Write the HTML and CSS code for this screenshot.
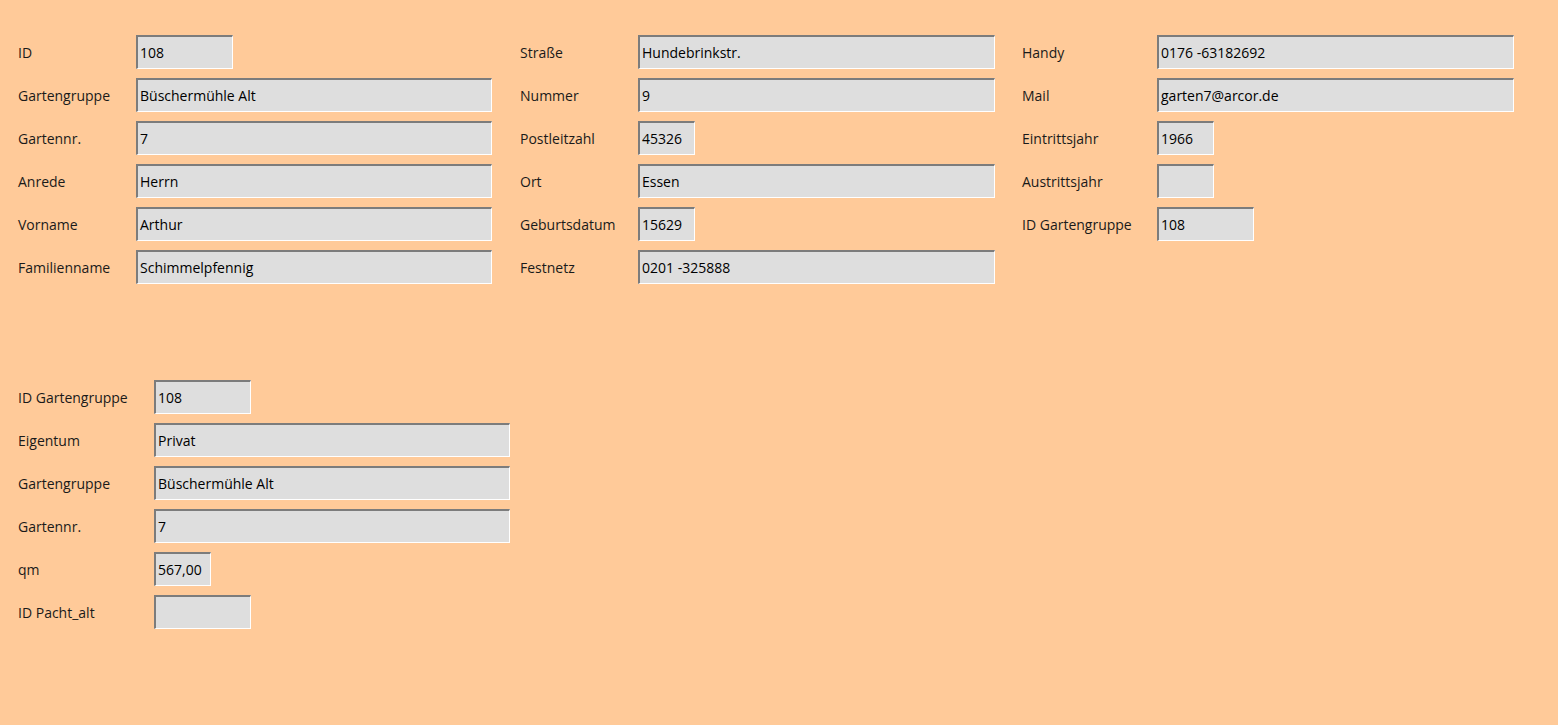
FILE: index.html
```html
<!DOCTYPE html>
<html lang="de">
<head>
<meta charset="utf-8">
<title>Mitglieder</title>
<link rel="stylesheet" href="styles.css">
</head>
<body>
<main class="page">
  <section class="top">
    <div class="col col1">
      <div class="row"><span class="lbl">ID</span><span class="fld w96">108</span></div>
      <div class="row"><span class="lbl">Gartengruppe</span><span class="fld w356">Büschermühle Alt</span></div>
      <div class="row"><span class="lbl">Gartennr.</span><span class="fld w356">7</span></div>
      <div class="row"><span class="lbl">Anrede</span><span class="fld w356">Herrn</span></div>
      <div class="row"><span class="lbl">Vorname</span><span class="fld w356">Arthur</span></div>
      <div class="row"><span class="lbl">Familienname</span><span class="fld w356">Schimmelpfennig</span></div>
    </div>
    <div class="col col2">
      <div class="row"><span class="lbl">Straße</span><span class="fld w357">Hundebrinkstr.</span></div>
      <div class="row"><span class="lbl">Nummer</span><span class="fld w357">9</span></div>
      <div class="row"><span class="lbl">Postleitzahl</span><span class="fld w57">45326</span></div>
      <div class="row"><span class="lbl">Ort</span><span class="fld w357">Essen</span></div>
      <div class="row"><span class="lbl">Geburtsdatum</span><span class="fld w57">15629</span></div>
      <div class="row"><span class="lbl">Festnetz</span><span class="fld w357">0201 -325888</span></div>
    </div>
    <div class="col col3">
      <div class="row"><span class="lbl">Handy</span><span class="fld w357">0176 -63182692</span></div>
      <div class="row"><span class="lbl">Mail</span><span class="fld w357">garten7@arcor.de</span></div>
      <div class="row"><span class="lbl">Eintrittsjahr</span><span class="fld w57">1966</span></div>
      <div class="row"><span class="lbl">Austrittsjahr</span><span class="fld w57"></span></div>
      <div class="row"><span class="lbl">ID Gartengruppe</span><span class="fld w97">108</span></div>
    </div>
  </section>
  <section class="bottom">
    <div class="col col4">
      <div class="row"><span class="lbl">ID Gartengruppe</span><span class="fld w96">108</span></div>
      <div class="row"><span class="lbl">Eigentum</span><span class="fld w355">Privat</span></div>
      <div class="row"><span class="lbl">Gartengruppe</span><span class="fld w355">Büschermühle Alt</span></div>
      <div class="row"><span class="lbl">Gartennr.</span><span class="fld w355">7</span></div>
      <div class="row"><span class="lbl">qm</span><span class="fld w57">567,00</span></div>
      <div class="row"><span class="lbl">ID Pacht_alt</span><span class="fld w96"></span></div>
    </div>
  </section>
</main>
</body>
</html>
```

FILE: styles.css
```css
html, body {
  margin: 0;
  padding: 0;
  background: #ffca99;
}
body {
  font-family: "Open Sans", "Noto Sans", "Liberation Sans", sans-serif;
  font-size: 14px;
  color: #1a1a1a;
  width: 1558px;
  height: 725px;
  overflow: hidden;
}
.page {
  padding: 35px 0 0 18px;
}
.top {
  display: flex;
}
.col {
  display: flex;
  flex-direction: column;
  gap: 9px;
}
.col1 { width: 502px; }
.col2 { width: 502px; }
.col3 { width: 500px; }
.row {
  display: flex;
  align-items: center;
  height: 34px;
}
.lbl {
  flex: none;
}
.col1 .lbl, .col2 .lbl { width: 118px; }
.col3 .lbl { width: 135px; }
.col4 .lbl { width: 136px; }
.fld {
  box-sizing: border-box;
  height: 34px;
  background: #dedede;
  border-top: 2px solid #7c7c7c;
  border-left: 2px solid #7c7c7c;
  border-right: 1px solid #ffffff;
  border-bottom: 1px solid #ffffff;
  padding: 0 0 0 2px;
  display: flex;
  align-items: center;
  color: #000;
  white-space: nowrap;
  overflow: hidden;
}
.w57 { width: 57px; }
.w96 { width: 97px; }
.w97 { width: 97px; }
.w355 { width: 356px; }
.w356 { width: 356px; }
.w357 { width: 357px; }
.bottom {
  margin-top: 96px;
}
```
